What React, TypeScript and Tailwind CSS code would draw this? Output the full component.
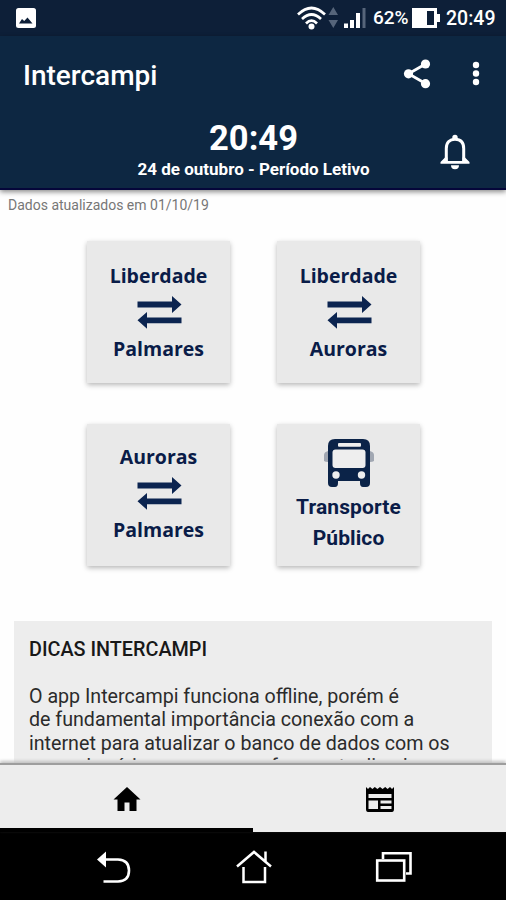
import React from "react";

const NAVY = "#0a1c48";

function StatusBar() {
  return (
    <div className="flex h-[36px] shrink-0 items-center bg-[#0d1f38] pl-[16px] pr-[10px] text-white">
      <svg width="20" height="20" viewBox="0 0 20 20" className="-mt-[1px]">
        <rect width="20" height="20" rx="2.5" fill="#fff" />
        <path d="M3 15.500l3-4.500 2.200 2 3.300-3.600 5 6.100z" fill="#0d1f38" />
      </svg>
      <div className="ml-auto flex items-center">
        <svg width="70" height="26" viewBox="0 0 70 26" fill="none" className="-ml-[2px] mr-[2px] -mt-[1px]">
          <g stroke="#fff" strokeWidth="2.7">
            <path d="M1 9.500Q14.500 -3.500 28 9.500" />
            <path d="M5 14Q14.500 5 24 14" />
            <path d="M9 18.500Q14.500 13 20 18.500" />
          </g>
          <circle cx="14.5" cy="21.500" r="3" fill="#fff" />
          <path d="M31.500 10h9.500l-4.700-8zM31.500 15h9.500l-4.700 8z" fill="#56657a" />
          <path d="M47 18.500h4v4.500h-4zM53 15h4v8h-4zM59 8h4v15h-4z" fill="#fff" />
          <path d="M65.500 3h3v20h-3z" fill="#56657a" />
        </svg>
        <span className="ml-[4px] w-[38px] whitespace-nowrap text-[19px] font-medium leading-[36px] tracking-[-0.1px]">62%</span>
        <svg width="29" height="22" viewBox="0 0 29 22" className="-mt-[1px] ml-[1px]">
          <path d="M0 1h25v6h3v8h-3v6H0z" fill="#fff" />
          <path d="M15 4h7v14h-7z" fill="#0d1f38" />
        </svg>
        <span className="ml-[5px] mt-px w-[50px] whitespace-nowrap text-[19.5px] font-medium leading-[36px]">20:49</span>
      </div>
    </div>
  );
}

function Header() {
  return (
    <header className="z-10 h-[154px] shrink-0 border-b-2 border-[#05063a] bg-[#0d2742] text-white shadow-[0_2px_5px_rgba(0,0,0,0.45)]">
      <div className="flex h-[78px] items-center pl-[23px] pr-[26px]">
        <h1 className="mt-px flex-1 text-[28px] font-medium leading-[32px]">Intercampi</h1>
        <svg width="28" height="32" viewBox="0 0 28 32" className="-mt-[2px] mr-[41px]">
          <path d="M22.500 6L5.500 15.800l17 9.700" fill="none" stroke="#fff" strokeWidth="2.800" />
          <circle cx="22.500" cy="6" r="4.600" fill="#fff" />
          <circle cx="5.500" cy="15.800" r="4.600" fill="#fff" />
          <circle cx="22.500" cy="25.700" r="4.600" fill="#fff" />
        </svg>
        <svg width="8" height="26" viewBox="0 0 8 26" fill="#fff" className="-mt-[3px]">
          <circle cx="4" cy="4" r="3.200" />
          <circle cx="4" cy="12.500" r="3.200" />
          <circle cx="4" cy="21" r="3.200" />
        </svg>
      </div>
      <div className="flex h-[74px] pl-[70px] pr-[36px]">
        <div className="flex-1 pr-[3px] text-center">
          <div className="pt-[4px] text-[34.500px] font-bold leading-[40px]">20:49</div>
          <div className="whitespace-nowrap text-[17px] font-bold leading-[22px]">24 de outubro - Período Letivo</div>
        </div>
        <svg width="30" height="36" viewBox="0 0 30 36" className="mt-[20px]">
          <path d="M6.300 28V14.500C6.300 8.300 9.800 5.300 15 5.300s8.700 3 8.700 9.200V28" fill="none" stroke="#fff" strokeWidth="3" />
          <path d="M12.300 5V3.500a2.700 2.700 0 0 1 5.400 0V5zM11 31.300h8a4 4 0 0 1-8 0z" fill="#fff" />
          <path d="M0.500 29.700v-1.700l4.500-4.500h2.500v3.500h15v-3.500H25l4.500 4.500v1.700z" fill="#fff" />
        </svg>
      </div>
    </header>
  );
}

function Arrows() {
  return (
    <svg width="45" height="33" viewBox="0 0 45 33" fill="#0b2450">
      <path d="M0.500 5.500h34.500V0l9.500 8.500-9.500 8.500v-5.500H0.500zM44.500 21.500H10v-5.500L0.500 24.300l9.500 8.500v-5.500h34.500z" />
    </svg>
  );
}

function RouteCard({ from, to, lowered }: { from: string; to: string; lowered?: boolean }) {
  return (
    <button
      className={
        "flex h-[142px] w-[143px] flex-col items-center bg-[#e9e9e9] font-['Open_Sans',sans-serif] text-[19.5px] font-bold leading-[26px] shadow-[0_2px_5px_rgba(0,0,0,0.28)] " +
        (lowered ? "pt-[21.5px]" : "pt-[19.5px]")
      }
      style={{ color: NAVY }}
    >
      <span>{from}</span>
      <span className="ml-px mt-[7px] h-[33px]">
        <Arrows />
      </span>
      <span className="mt-[7px]">{to}</span>
    </button>
  );
}

function BusCard() {
  return (
    <button
      className="flex h-[142px] w-[143px] flex-col items-center bg-[#e9e9e9] pt-[15px] text-[21px] font-bold leading-[31px] tracking-[0.1px] shadow-[0_2px_5px_rgba(0,0,0,0.28)]"
      style={{ color: NAVY }}
    >
      <svg width="50" height="48" viewBox="0 0 50 48">
        <path d="M4 12q-4 1-4 4v6q1.500 1 4 1zM46 12q4 1 4 4v6q-1.500 1-4 1z" fill="#a1a7b2" />
        <path d="M4 7Q4 0 11 0H39Q46 0 46 7V44Q46 48 42 48H39Q36 48 36 44V42H14V44Q14 48 11 48H8Q4 48 4 44z" fill="#0b2348" />
        <rect x="14" y="4" width="23" height="3.700" rx="1" fill="#eee" />
        <rect x="8.500" y="10.500" width="33" height="18.500" rx="3" fill="#eee" />
        <circle cx="12" cy="36" r="3.700" fill="#eee" />
        <circle cx="37.500" cy="36" r="3.700" fill="#eee" />
      </svg>
      <span className="mt-[5px]">Transporte</span>
      <span>Público</span>
    </button>
  );
}

function Tips() {
  return (
    <section className="mx-[14px] mt-[55px] h-[142px] overflow-hidden bg-[#ededed] pl-[15px] pt-[17px] text-[#2b2b2b]">
      <h2 className="text-[19.8px] font-medium leading-[24px] text-[#181818]">DICAS INTERCAMPI</h2>
      <p className="mt-[23px] h-[75px] overflow-hidden whitespace-nowrap text-[19.65px] leading-[23.4px]">
        O app Intercampi funciona offline, porém é
        <br />
        de fundamental importância conexão com a
        <br />
        internet para atualizar o banco de dados com os
        <br />
        novos horários sempre que forem atualizados
      </p>
    </section>
  );
}

function TabBar() {
  return (
    <nav className="z-10 grid h-[69px] shrink-0 grid-cols-2 border-t-2 border-[#9e9e9e] bg-[#ededed] shadow-[0_-2px_3px_rgba(190,190,190,0.9)]">
      <div className="flex items-start justify-center border-b-4 border-black pt-[21px]">
        <svg width="28" height="26" viewBox="0 0 28 26">
          <path d="M14 1L0.500 13.500h4V25h7v-8.500h5V25h7V13.500h4z" />
        </svg>
      </div>
      <div className="flex items-start justify-center pt-[21px]">
        <svg width="28" height="26" viewBox="0 0 28 26">
          <path fillRule="evenodd" d="M0 1l2 2 2-2 2.400 2 2.400-2 2.600 2L14 1l2.600 2 2.600-2 2.400 2L24 1l2 2 2-2v22q0 3-2 3H2q-2 0-2-3zM2.500 8v4h23V8zM2.500 14.500V23H12v-8.500zM14.500 14.500v3h11v-3zM14.500 20v3h11v-3z" />
        </svg>
      </div>
    </nav>
  );
}

function SystemNav() {
  return (
    <div className="flex h-[68px] shrink-0 bg-black pl-[96px] pt-[17px]">
      <svg width="36" height="36" viewBox="0 0 36 36" fill="none" stroke="#fff" strokeWidth="2.600">
        <path d="M9 10.500H22Q33 11 33 21.500T22 32.500H7.500" />
        <path d="M1 10.500L10 2.500v16z" fill="#fff" stroke="none" />
      </svg>
      <svg width="38" height="36" viewBox="0 0 38 36" fill="none" stroke="#fff" strokeWidth="2.500" className="ml-[103px]">
        <path d="M2 17.500L19 3l17 14.500M30.500 2.500v10M8.500 18v15H30V18" />
      </svg>
      <svg width="38" height="36" viewBox="0 0 38 36" fill="none" stroke="#fff" strokeWidth="2.600" className="ml-[101px]">
        <rect x="3.200" y="11.500" width="27" height="20" />
        <path d="M9 10V4.200H36.500V24.500H32" />
      </svg>
    </div>
  );
}

export default function App() {
  return (
    <div className="flex h-[900px] w-[506px] flex-col overflow-hidden bg-[#fefefe] font-['Roboto',sans-serif]">
      <StatusBar />
      <Header />
      <main className="h-[573px] shrink-0 overflow-hidden">
        <p className="pl-[8px] pt-[6px] text-[14px] leading-[18px] text-[#777]">Dados atualizados em 01/10/19</p>
        <div className="ml-[87px] mt-[27px] grid w-max grid-cols-2 gap-x-[47px] gap-y-[41px]">
          <RouteCard from="Liberdade" to="Palmares" lowered />
          <RouteCard from="Liberdade" to="Auroras" lowered />
          <RouteCard from="Auroras" to="Palmares" />
          <BusCard />
        </div>
        <Tips />
      </main>
      <TabBar />
      <SystemNav />
    </div>
  );
}
